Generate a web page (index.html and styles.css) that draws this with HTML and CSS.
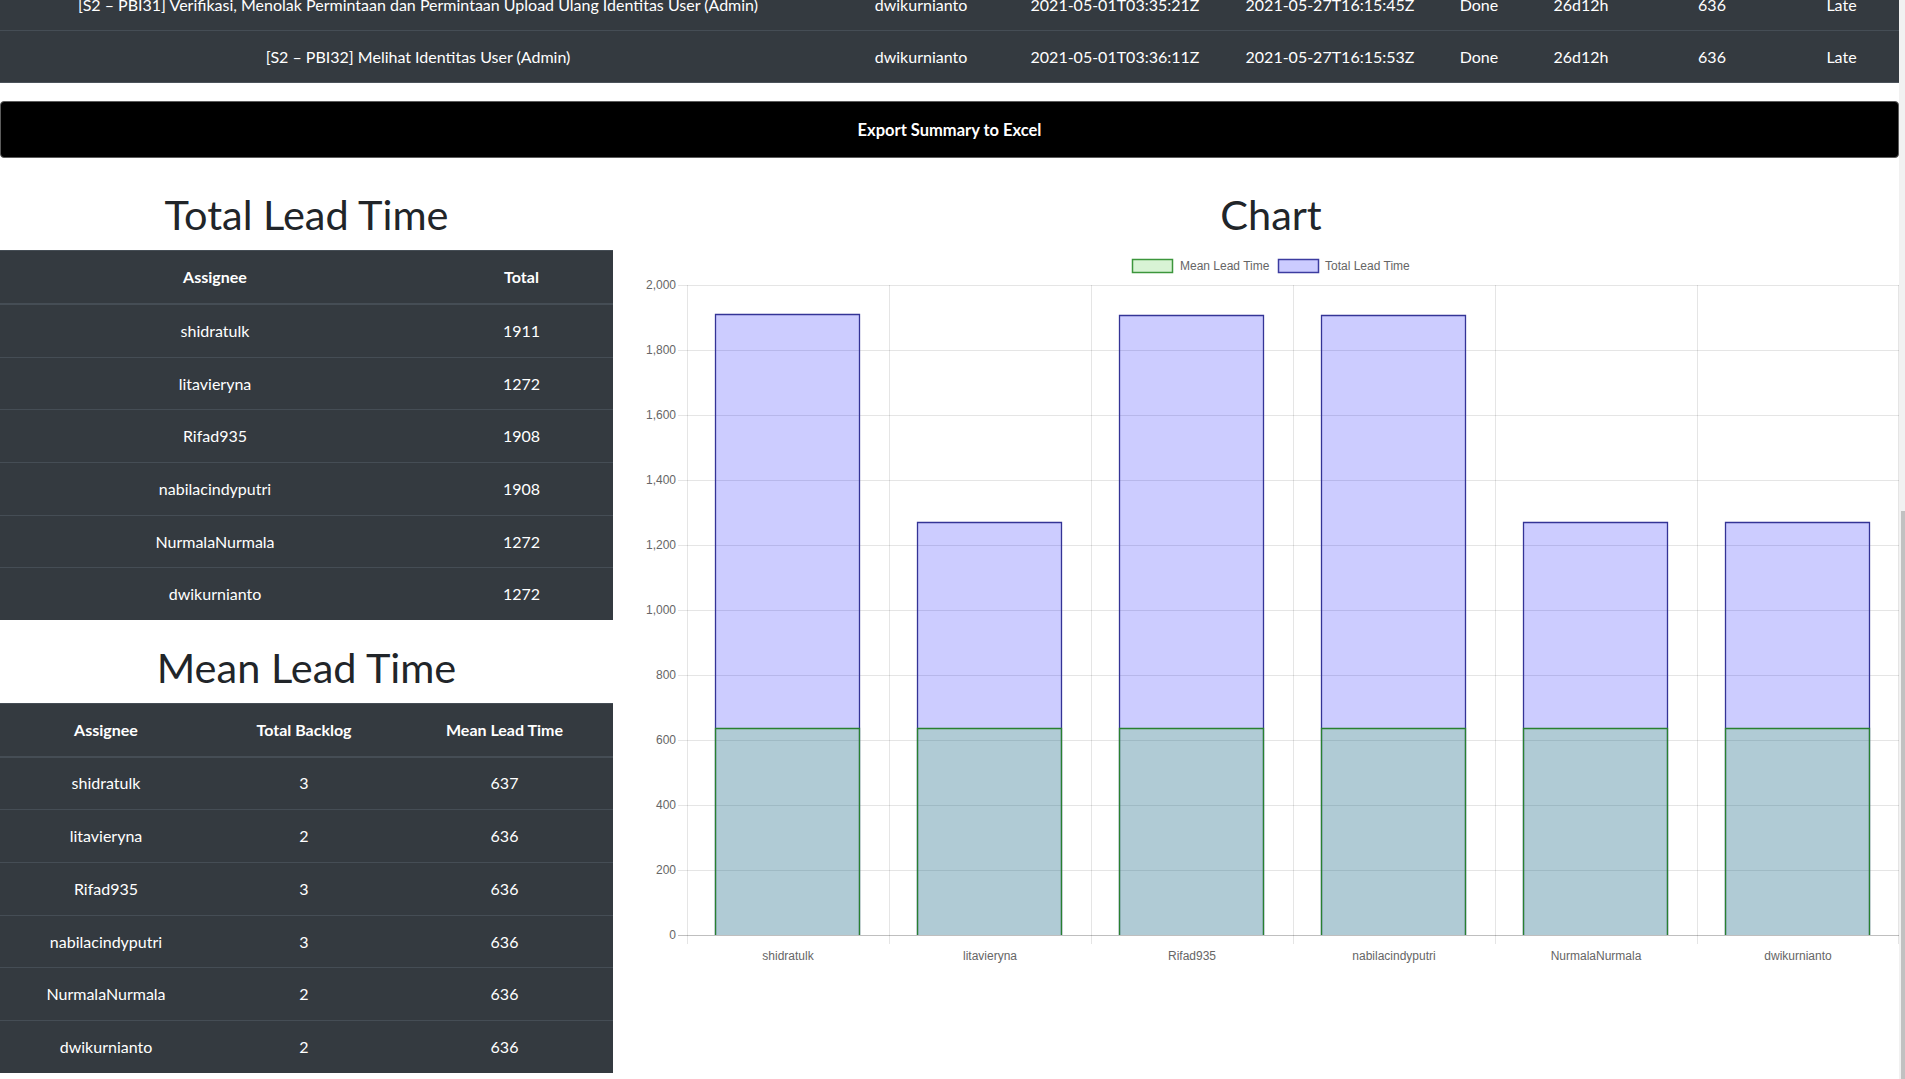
FILE: index.html
```html
<!DOCTYPE html>
<html lang="id">
<head>
<meta charset="utf-8">
<title>Lead Time Summary</title>
<link rel="stylesheet" href="styles.css">
</head>
<body>
<div class="page">
  <table class="dtable backlog">
    <colgroup>
      <col class="c-title"><col class="c-user"><col class="c-start"><col class="c-end"><col class="c-status"><col class="c-dur"><col class="c-lead"><col class="c-late">
    </colgroup>
    <tbody>
      <tr>
        <td>[S2 – PBI31] Verifikasi, Menolak Permintaan dan Permintaan Upload Ulang Identitas User (Admin)</td>
        <td>dwikurnianto</td>
        <td>2021-05-01T03:35:21Z</td>
        <td>2021-05-27T16:15:45Z</td>
        <td>Done</td>
        <td>26d12h</td>
        <td>636</td>
        <td>Late</td>
      </tr>
      <tr>
        <td>[S2 – PBI32] Melihat Identitas User (Admin)</td>
        <td>dwikurnianto</td>
        <td>2021-05-01T03:36:11Z</td>
        <td>2021-05-27T16:15:53Z</td>
        <td>Done</td>
        <td>26d12h</td>
        <td>636</td>
        <td>Late</td>
      </tr>
    </tbody>
  </table>

  <button class="export-btn" type="button">Export Summary to Excel</button>

  <div class="summary">
    <div class="left-col">
      <h2 class="title">Total Lead Time</h2>
      <table class="dtable stable">
        <colgroup><col class="t-user"><col></colgroup>
        <thead><tr><th>Assignee</th><th>Total</th></tr></thead>
        <tbody>
          <tr><td>shidratulk</td><td>1911</td></tr>
          <tr><td>litavieryna</td><td>1272</td></tr>
          <tr><td>Rifad935</td><td>1908</td></tr>
          <tr><td>nabilacindyputri</td><td>1908</td></tr>
          <tr><td>NurmalaNurmala</td><td>1272</td></tr>
          <tr><td>dwikurnianto</td><td>1272</td></tr>
        </tbody>
      </table>

      <h2 class="title">Mean Lead Time</h2>
      <table class="dtable stable">
        <colgroup><col class="m-user"><col class="m-backlog"><col></colgroup>
        <thead><tr><th>Assignee</th><th>Total Backlog</th><th>Mean Lead Time</th></tr></thead>
        <tbody>
          <tr><td>shidratulk</td><td>3</td><td>637</td></tr>
          <tr><td>litavieryna</td><td>2</td><td>636</td></tr>
          <tr><td>Rifad935</td><td>3</td><td>636</td></tr>
          <tr><td>nabilacindyputri</td><td>3</td><td>636</td></tr>
          <tr><td>NurmalaNurmala</td><td>2</td><td>636</td></tr>
          <tr><td>dwikurnianto</td><td>2</td><td>636</td></tr>
        </tbody>
      </table>
    </div>

    <div class="right-col">
      <h2 class="title chart-title">Chart</h2>
      <svg class="chart" width="1256" height="760" viewBox="0 0 1256 760" xmlns="http://www.w3.org/2000/svg">
        <!-- legend -->
        <rect x="489.5" y="11.5" width="40" height="13" fill="rgba(77,200,64,0.22)" stroke="rgb(60,150,60)" stroke-width="1.5"/>
        <text x="537" y="22" class="lbl">Mean Lead Time</text>
        <rect x="635.5" y="11.5" width="40" height="13" fill="rgba(0,0,255,0.2)" stroke="rgb(60,60,160)" stroke-width="1.5"/>
        <text x="682" y="22" class="lbl">Total Lead Time</text>

        <!-- horizontal grid -->
        <g stroke="rgba(0,0,0,0.1)" stroke-width="1">
          <line x1="35" x2="1256" y1="37.5" y2="37.5"/>
          <line x1="35" x2="1256" y1="102.5" y2="102.5"/>
          <line x1="35" x2="1256" y1="167.5" y2="167.5"/>
          <line x1="35" x2="1256" y1="232.5" y2="232.5"/>
          <line x1="35" x2="1256" y1="297.5" y2="297.5"/>
          <line x1="35" x2="1256" y1="362.5" y2="362.5"/>
          <line x1="35" x2="1256" y1="427.5" y2="427.5"/>
          <line x1="35" x2="1256" y1="492.5" y2="492.5"/>
          <line x1="35" x2="1256" y1="557.5" y2="557.5"/>
          <line x1="35" x2="1256" y1="622.5" y2="622.5"/>
        </g>
        <!-- vertical grid -->
        <g stroke="rgba(0,0,0,0.1)" stroke-width="1">
          <line x1="44.5" x2="44.5" y1="37" y2="696"/>
          <line x1="246.5" x2="246.5" y1="37" y2="696"/>
          <line x1="448.5" x2="448.5" y1="37" y2="696"/>
          <line x1="650.5" x2="650.5" y1="37" y2="696"/>
          <line x1="852.5" x2="852.5" y1="37" y2="696"/>
          <line x1="1054.5" x2="1054.5" y1="37" y2="696"/>
          <line x1="1255.5" x2="1255.5" y1="37" y2="696"/>
        </g>
        <line x1="35" x2="1256" y1="687.5" y2="687.5" stroke="rgba(0,0,0,0.25)" stroke-width="1"/>

        <!-- y labels -->
        <g class="lbl" text-anchor="end">
          <text x="33" y="41">2,000</text>
          <text x="33" y="106">1,800</text>
          <text x="33" y="171">1,600</text>
          <text x="33" y="236">1,400</text>
          <text x="33" y="301">1,200</text>
          <text x="33" y="366">1,000</text>
          <text x="33" y="431">800</text>
          <text x="33" y="496">600</text>
          <text x="33" y="561">400</text>
          <text x="33" y="626">200</text>
          <text x="33" y="691">0</text>
        </g>

        <!-- total bars -->
        <g fill="rgba(0,0,255,0.2)">
          <rect x="72" y="66" width="145" height="621"/>
          <rect x="274" y="274" width="145" height="413"/>
          <rect x="476" y="67" width="145" height="620"/>
          <rect x="678" y="67" width="145" height="620"/>
          <rect x="880" y="274" width="145" height="413"/>
          <rect x="1082" y="274" width="145" height="413"/>
        </g>
        <g fill="none" stroke="rgb(52,52,150)" stroke-width="1.3">
          <path d="M72.5 687V66.5H216.5V687"/>
          <path d="M274.5 687V274.5H418.5V687"/>
          <path d="M476.5 687V67.5H620.5V687"/>
          <path d="M678.5 687V67.5H822.5V687"/>
          <path d="M880.5 687V274.5H1024.5V687"/>
          <path d="M1082.5 687V274.5H1226.5V687"/>
        </g>

        <!-- mean bars -->
        <g fill="rgba(77,200,64,0.22)">
          <rect x="72" y="480" width="145" height="207"/>
          <rect x="274" y="480" width="145" height="207"/>
          <rect x="476" y="480" width="145" height="207"/>
          <rect x="678" y="480" width="145" height="207"/>
          <rect x="880" y="480" width="145" height="207"/>
          <rect x="1082" y="480" width="145" height="207"/>
        </g>
        <g fill="none" stroke="rgb(40,128,48)" stroke-width="1.3">
          <path d="M72.5 687V480.5H216.5V687"/>
          <path d="M274.5 687V480.5H418.5V687"/>
          <path d="M476.5 687V480.5H620.5V687"/>
          <path d="M678.5 687V480.5H822.5V687"/>
          <path d="M880.5 687V480.5H1024.5V687"/>
          <path d="M1082.5 687V480.5H1226.5V687"/>
        </g>

        <!-- x labels -->
        <g class="lbl" text-anchor="middle">
          <text x="145" y="712">shidratulk</text>
          <text x="347" y="712">litavieryna</text>
          <text x="549" y="712">Rifad935</text>
          <text x="751" y="712">nabilacindyputri</text>
          <text x="953" y="712">NurmalaNurmala</text>
          <text x="1155" y="712">dwikurnianto</text>
        </g>
      </svg>
    </div>
  </div>
</div>
<div class="scrollbar"><div class="scroll-thumb"></div></div>
</body>
</html>
```

FILE: styles.css
```css
html, body {
  margin: 0;
  padding: 0;
  background: #ffffff;
}

body {
  font-family: Lato, "Segoe UI", "Open Sans", sans-serif;
  font-size: 16px;
  line-height: 24px;
  color: #212529;
  overflow: hidden;
}

.page {
  margin-top: -22px;
  margin-right: 6px;
}

/* dark tables */
.dtable {
  width: 100%;
  border-collapse: collapse;
  table-layout: fixed;
  background: #343a40;
  color: #ffffff;
}

.dtable td,
.dtable th {
  text-align: center;
  white-space: nowrap;
  line-height: 24px;
  border-top: 1px solid #454d55;
  padding: 13.5px 4px;
}

.backlog {
  border-bottom: 1px solid #4b525a;
}

.c-title { width: 836px; }
.c-user { width: 170px; }
.c-start { width: 218px; }
.c-end { width: 212px; }
.c-status { width: 86px; }
.c-dur { width: 118px; }
.c-lead { width: 144px; }

/* export button */
.export-btn {
  display: block;
  width: 100%;
  margin-top: 18px;
  padding: 15.5px 12px;
  background: #000000;
  color: #ffffff;
  border: 1px solid #5c5c5c;
  border-radius: 4px;
  font-family: Lato, "Segoe UI", sans-serif;
  font-size: 16.5px;
  font-weight: 700;
  line-height: 24px;
  text-align: center;
}

/* summary area */
.summary {
  display: flex;
  padding-top: 9.5px;
}

.left-col {
  width: 613px;
  flex: none;
}

.right-col {
  flex: 1;
  padding-left: 30px;
}

.title {
  margin: 21.5px 0 11px;
  font-size: 41.5px;
  line-height: 50px;
  font-weight: 400;
  text-align: center;
  color: #212529;
}

.chart-title {
  margin-bottom: 9px;
}

.stable th {
  font-weight: 700;
  padding: 14px 4px;
  border-bottom: 2px solid #454d55;
}

.stable td {
  padding: 13.85px 4px;
}

.t-user { width: 430px; }
.m-user { width: 212px; }
.m-backlog { width: 184px; }

/* chart */
.chart {
  display: block;
}

.chart .lbl,
.chart .lbl text {
  font-family: "Liberation Sans", Arial, sans-serif;
  font-size: 12px;
  fill: #666666;
}

/* fake overlay scrollbar */
.scrollbar {
  position: fixed;
  top: 0;
  right: 0;
  width: 6px;
  height: 100vh;
  background: #f1f1f1;
}

.scroll-thumb {
  position: absolute;
  top: 511px;
  bottom: 0;
  right: 0;
  width: 4px;
  background: #c1c1c1;
}
```
